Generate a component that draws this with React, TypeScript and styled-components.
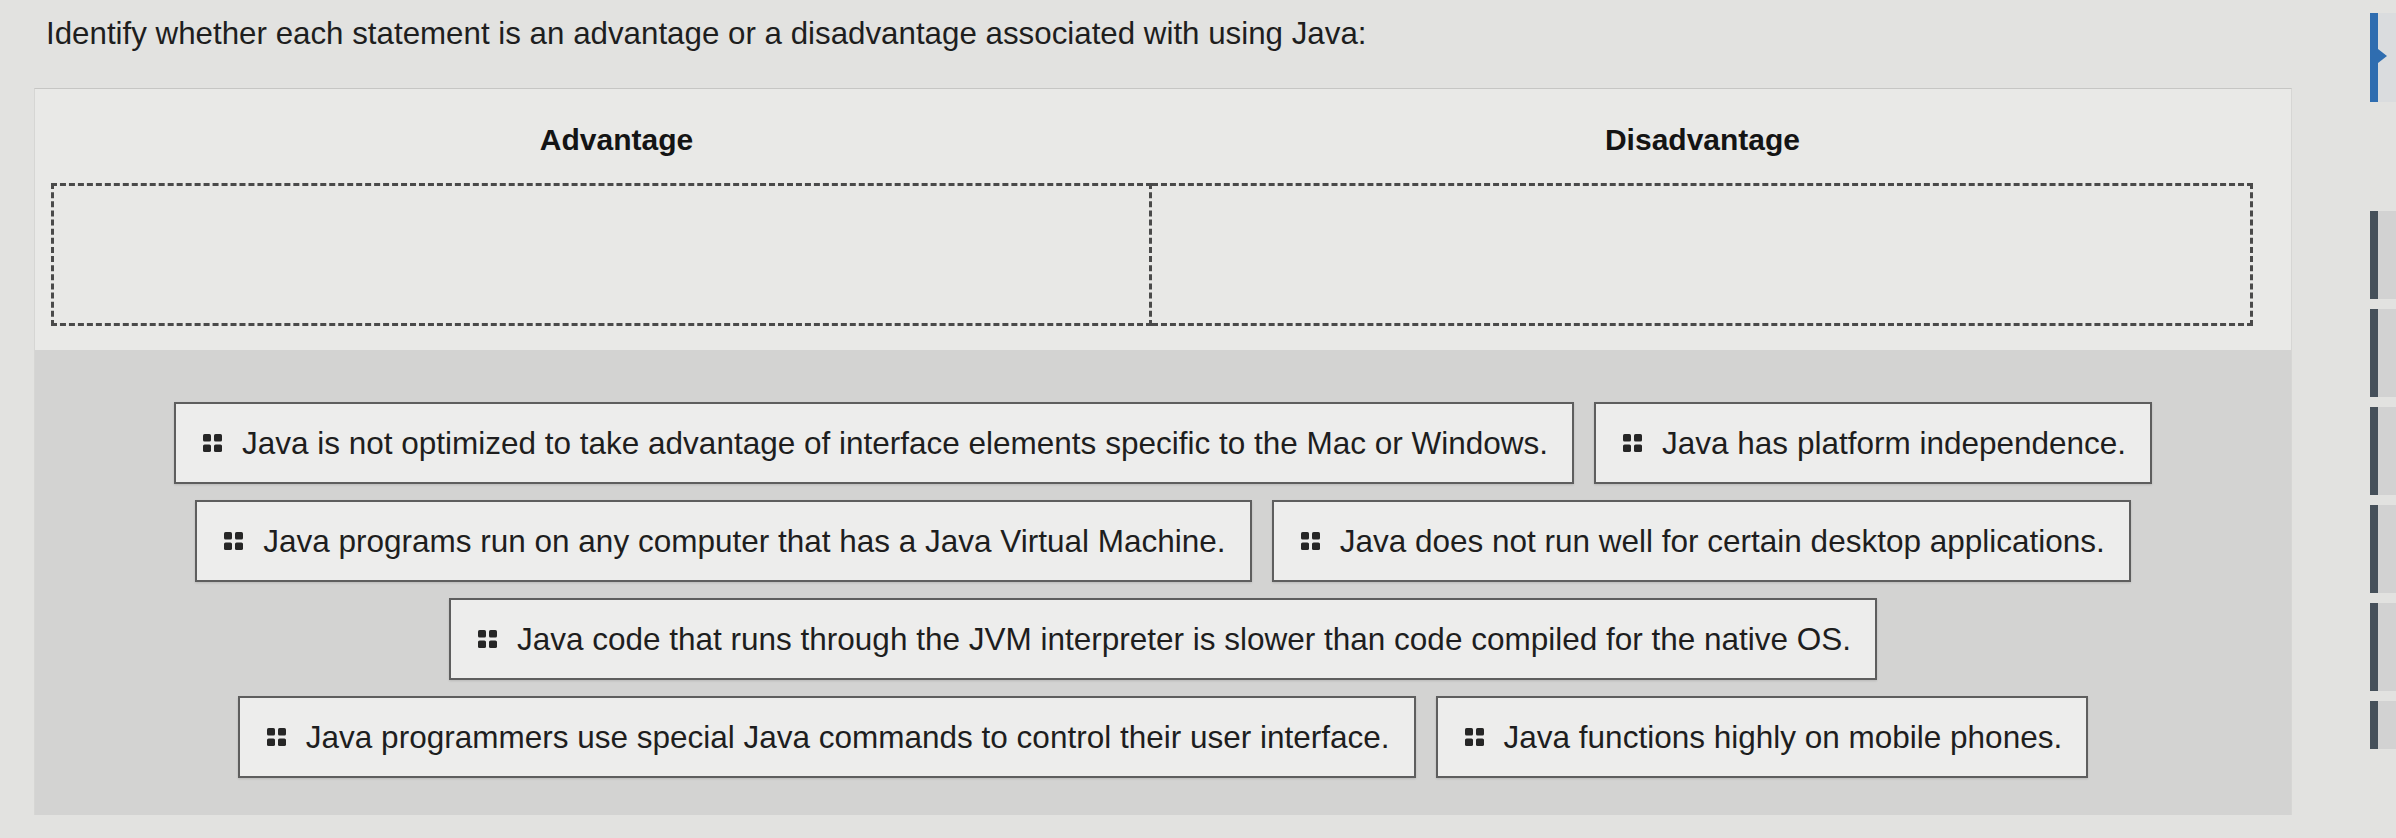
import React from "react";
import styled, { createGlobalStyle } from "styled-components";

const GlobalStyle = createGlobalStyle`
  html, body {
    margin: 0;
    padding: 0;
    background: #e2e2e0;
  }
  body {
    font-family: "Liberation Sans", Arial, Helvetica, sans-serif;
    color: #1c1c1c;
  }
`;

const Page = styled.div`
  display: flex;
  width: 2396px;
  height: 838px;
  overflow: hidden;
  background: #e2e2e0;
`;

const Main = styled.main`
  flex: 1;
  display: flex;
  flex-direction: column;
  padding-left: 34px;
  padding-right: 78px;
`;

const Title = styled.h1`
  margin: 16px 0 0 12px;
  font-size: 31.3px;
  line-height: 36px;
  font-weight: 400;
  color: #1e1e1e;
  white-space: nowrap;
`;

const Panel = styled.section`
  margin-top: 36px;
  background: #e9e9e7;
  border-top: 1px solid #c6c6c4;
  border-left: 1px solid #d6d6d4;
  border-right: 1px solid #d6d6d4;
  display: flex;
  flex-direction: column;
`;

const Columns = styled.div`
  display: grid;
  grid-template-columns: 1fr 1fr;
  padding: 34px 38px 0 16px;
`;

const Column = styled.div`
  display: flex;
  flex-direction: column;
  align-items: stretch;
`;

const ColumnHeader = styled.div<{ $shift?: number }>`
  font-size: 30px;
  line-height: 34px;
  font-weight: 700;
  color: #141414;
  text-align: center;
  margin-bottom: 26px;
  padding-left: ${(p) => p.$shift ?? 0}px;
`;

const DropZone = styled.div<{ $joined?: boolean }>`
  height: 137px;
  border: 3px dashed #4a4a4a;
  border-left-width: ${(p) => (p.$joined ? "0" : "3px")};
  background: #e8e8e6;
`;

const Tray = styled.div`
  margin-top: 24px;
  background: #d3d3d2;
  padding: 52px 20px 37px;
  display: flex;
  flex-wrap: wrap;
  justify-content: center;
  column-gap: 20px;
  row-gap: 16px;
  height: 465px;
  box-sizing: border-box;
  align-content: flex-start;
`;

const Card = styled.div`
  height: 82px;
  box-sizing: border-box;
  display: flex;
  align-items: center;
  gap: 20px;
  padding: 0 24px 0 27px;
  background: #ededec;
  border: 2px solid #5e5e5e;
  box-shadow: 0 1px 2px rgba(0, 0, 0, 0.12);
  font-size: 31.5px;
  color: #1e1e1e;
  white-space: nowrap;
`;

const Strip = styled.aside`
  width: 26px;
  display: flex;
  flex-direction: column;
  padding-top: 13px;
`;

const TabGroup = styled.div<{ $offset: number }>`
  display: flex;
  flex-direction: column;
  gap: 10px;
  margin-top: ${(p) => p.$offset}px;
`;

const TabMark = styled.div<{ $active?: boolean; $h: number }>`
  position: relative;
  height: ${(p) => p.$h}px;
  border-left: 8px solid ${(p) => (p.$active ? "#2f6db0" : "#46505a")};
  background: ${(p) => (p.$active ? "#dadcde" : "#d2d2d2")};
  ${(p) =>
    p.$active
      ? `&::after {
          content: "";
          position: absolute;
          left: 0;
          top: 36px;
          border-top: 7px solid transparent;
          border-bottom: 7px solid transparent;
          border-left: 9px solid #2f6db0;
        }`
      : ""}
`;

const HandleIcon = () => (
  <svg width="19" height="18" viewBox="0 0 19 18" aria-hidden="true">
    <rect x="0" y="0" width="8" height="7.5" rx="1.6" fill="#262626" />
    <rect x="11" y="0" width="8" height="7.5" rx="1.6" fill="#262626" />
    <rect x="0" y="10.5" width="8" height="7.5" rx="1.6" fill="#262626" />
    <rect x="11" y="10.5" width="8" height="7.5" rx="1.6" fill="#262626" />
  </svg>
);

const statements = [
  "Java is not optimized to take advantage of interface elements specific to the Mac or Windows.",
  "Java has platform independence.",
  "Java programs run on any computer that has a Java Virtual Machine.",
  "Java does not run well for certain desktop applications.",
  "Java code that runs through the JVM interpreter is slower than code compiled for the native OS.",
  "Java programmers use special Java commands to control their user interface.",
  "Java functions highly on mobile phones.",
];

export default function App() {
  return (
    <>
      <GlobalStyle />
      <Page>
        <Main>
          <Title>
            Identify whether each statement is an advantage or a disadvantage associated with using Java:
          </Title>
          <Panel>
            <Columns>
              <Column>
                <ColumnHeader $shift={30}>Advantage</ColumnHeader>
                <DropZone />
              </Column>
              <Column>
                <ColumnHeader>Disadvantage</ColumnHeader>
                <DropZone $joined />
              </Column>
            </Columns>
            <Tray>
              {statements.map((s) => (
                <Card key={s}>
                  <HandleIcon />
                  <span>{s}</span>
                </Card>
              ))}
            </Tray>
          </Panel>
        </Main>
        <Strip>
          <TabMark $active $h={89} />
          <TabGroup $offset={109}>
            <TabMark $h={88} />
            <TabMark $h={88} />
            <TabMark $h={88} />
            <TabMark $h={88} />
            <TabMark $h={88} />
            <TabMark $h={48} />
          </TabGroup>
        </Strip>
      </Page>
    </>
  );
}
